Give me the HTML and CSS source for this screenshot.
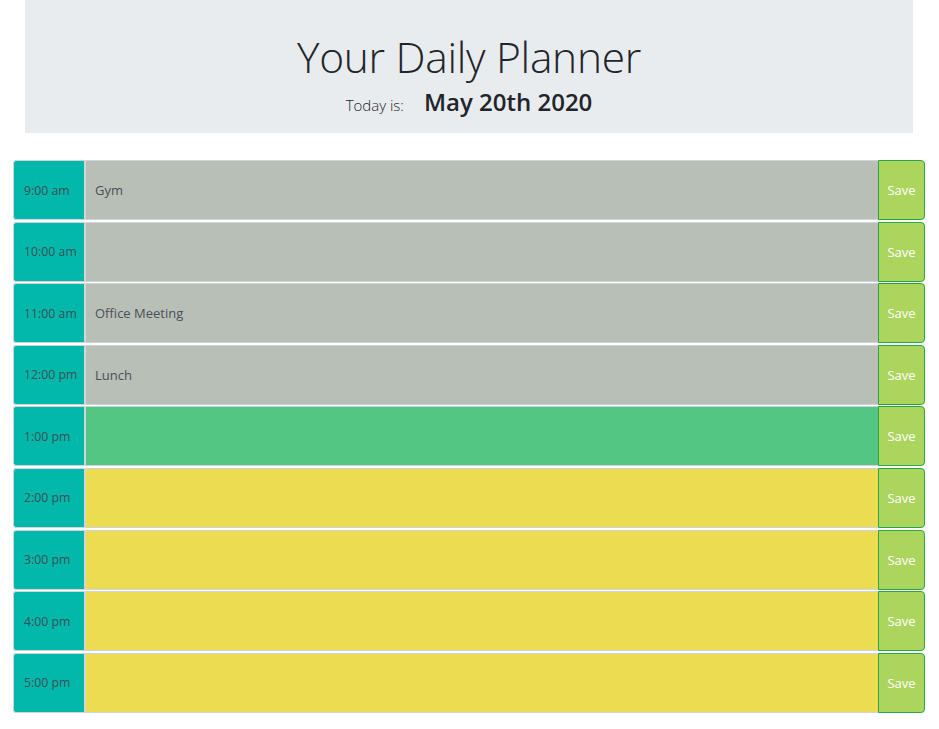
FILE: index.html
```html
<!DOCTYPE html>
<html>
<head>
<meta charset="utf-8">
<title>Work Day Scheduler</title>
<link rel="stylesheet" href="styles.css">
</head>
<body>
<header class="jumbotron">
  <h1 class="title">Your Daily Planner</h1>
  <p class="lead"><span class="today-label">Today is:</span><span class="today-date">May 20th 2020</span></p>
</header>
<main class="planner">
  <div class="row"><div class="hour">9:00 am</div><div class="task past">Gym</div><button class="save">Save</button></div>
  <div class="row"><div class="hour">10:00 am</div><div class="task past"></div><button class="save">Save</button></div>
  <div class="row"><div class="hour">11:00 am</div><div class="task past">Office Meeting</div><button class="save">Save</button></div>
  <div class="row"><div class="hour">12:00 pm</div><div class="task past">Lunch</div><button class="save">Save</button></div>
  <div class="row"><div class="hour">1:00 pm</div><div class="task present"></div><button class="save">Save</button></div>
  <div class="row"><div class="hour">2:00 pm</div><div class="task future"></div><button class="save">Save</button></div>
  <div class="row"><div class="hour">3:00 pm</div><div class="task future"></div><button class="save">Save</button></div>
  <div class="row"><div class="hour">4:00 pm</div><div class="task future"></div><button class="save">Save</button></div>
  <div class="row"><div class="hour">5:00 pm</div><div class="task future"></div><button class="save">Save</button></div>
</main>
</body>
</html>
```
FILE: styles.css
```css
html, body {
  margin: 0;
  padding: 0;
  background: #fff;
  font-family: "Open Sans", "Noto Sans", sans-serif;
  color: #212529;
}
.jumbotron {
  margin: 0 26px 0 25px;
  height: 133px;
  background: #e9ecef;
  text-align: center;
  box-sizing: border-box;
  padding-top: 29px;
}
.title {
  margin: 0;
  font-family: "Open Sans", sans-serif;
  font-weight: 300;
  font-size: 42.5px;
  line-height: 56px;
  letter-spacing: -0.3px;
  color: #212529;
}
.lead {
  margin: 0;
  display: flex;
  justify-content: center;
  align-items: baseline;
  gap: 20px;
  line-height: 34px;
}
.today-label {
  font-size: 15px;
  font-weight: 300;
  color: #212529;
}
.today-date {
  font-size: 24px;
  font-weight: 600;
  color: #212529;
}
.planner {
  margin: 27px 14px 0 13px;
  display: flex;
  flex-direction: column;
  gap: 1.6px;
}
.row {
  display: flex;
  height: 60px;
}
.hour {
  flex: 0 0 73px;
  box-sizing: border-box;
  background: #02b8aa;
  border: 1px solid #ced4da;
  border-right: 2px solid #d3d6d8;
  border-radius: 3px 0 0 3px;
  display: flex;
  align-items: center;
  padding-left: 10px;
  font-size: 12.3px;
  white-space: nowrap;
  color: #3d5057;
}
.task {
  flex: 1;
  border-top: 1px solid #ced4da;
  border-bottom: 1px solid #ced4da;
  display: flex;
  align-items: center;
  padding-left: 9px;
  font-size: 13px;
  color: #495057;
}
.past { background: #b8bfb7; }
.present { background: #53c684; }
.future { background: #ebdc51; }
.save {
  flex: 0 0 47px;
  margin: 0;
  background: #acd55e;
  border: 1px solid #28a745;
  border-radius: 0 4px 4px 0;
  color: #fff;
  font-family: "Open Sans", "Noto Sans", sans-serif;
  font-size: 13px;
  padding: 0;
}
```
